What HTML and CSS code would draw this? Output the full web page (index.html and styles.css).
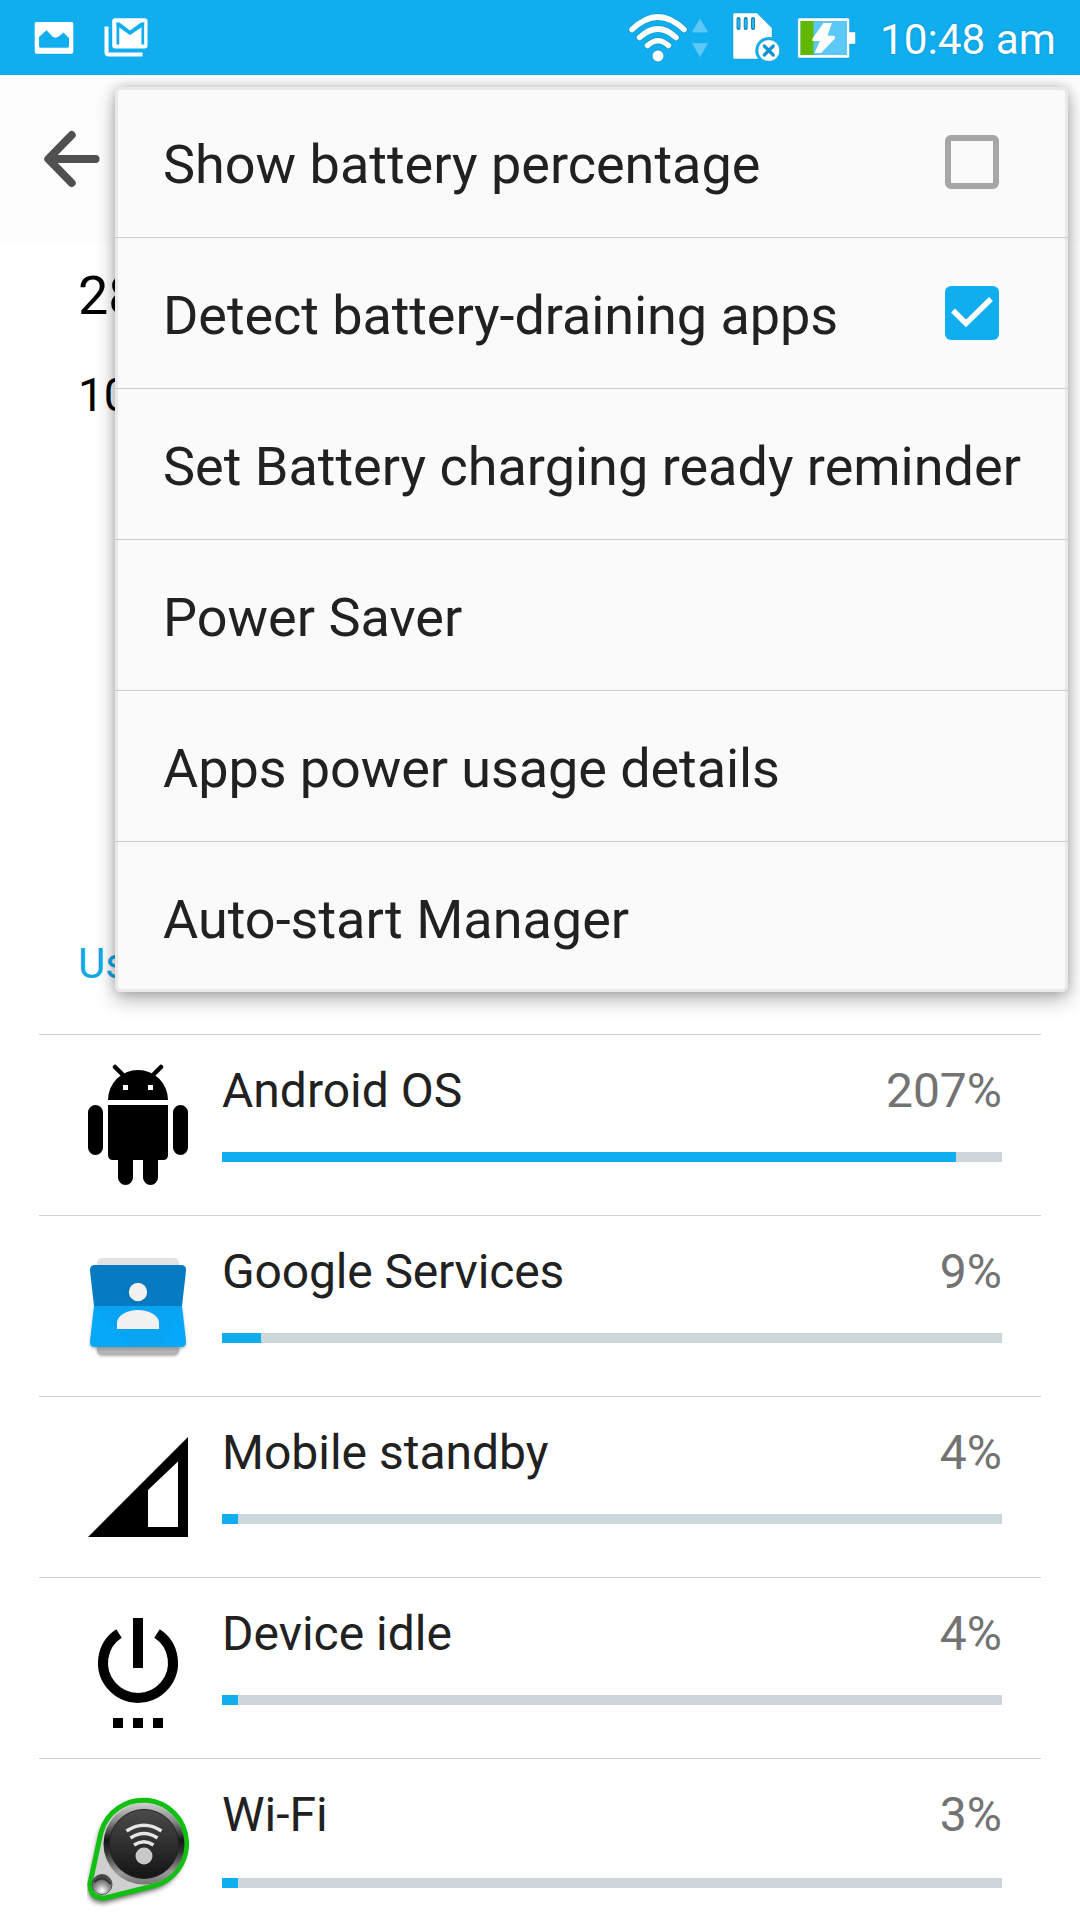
FILE: index.html
```html
<!DOCTYPE html>
<html lang="en">
<head>
<meta charset="utf-8">
<title>Battery</title>
<link rel="stylesheet" href="styles.css">
</head>
<body>
<div class="screen">
  <header class="status">
    <div class="status-left">
      <svg width="40" height="34" viewBox="34 21 40 34"><path fill="#fff" fill-rule="evenodd" d="M36.500 22H71.500Q73.300 22 73.300 23.800V52Q73.300 53.700 71.500 53.700H36.500Q34.700 53.700 34.700 52V23.800Q34.700 22 36.500 22ZM39 37V46Q39 47.700 40.700 47.700H67.300Q69 47.700 69 46V38L63.500 32.500L60 35.500Q55.500 39.500 52 36L46.500 30.300Z"/></svg>
      <svg width="44" height="39" viewBox="104.500 18.500 44 39"><path fill="none" stroke="#fff" stroke-width="4" d="M107 27V52.500Q107 55 109.500 55H143"/><rect x="112.700" y="18.800" width="35.300" height="30.200" rx="3" fill="#fff"/><path fill="none" stroke="#10aeef" stroke-width="2.700" d="M118.400 45V25L130.500 33.600L143.300 25V45"/><path fill="#10aeef" d="M117 23H120L130.500 31L141.500 23H144.700V26L130.500 35.500L117 26Z"/></svg>
    </div>
    <div class="status-right">
      <svg class="wifi" width="62" height="52" viewBox="627 12 62 52"><g fill="none" stroke="#0f86b8" stroke-opacity=".45" stroke-width="7.200" stroke-linecap="round"><path d="M632 29.500Q658 4.500 684 29.500M639.500 37.500Q658 20.500 676 37.500M647.500 45.500Q658 36 668.500 45.500"/></g><g fill="none" stroke="#fff" stroke-width="5.500" stroke-linecap="round"><path d="M632 29.500Q658 4.500 684 29.500M639.500 37.500Q658 20.500 676 37.500M647.500 45.500Q658 36 668.500 45.500"/></g><circle cx="658" cy="56" r="5.700" fill="#fff" stroke="#0f86b8" stroke-opacity=".4"/></svg>
      <svg class="arrows" width="16" height="52" viewBox="692.500 12 16 52"><path fill="#5fc8f6" stroke="#5fc8f6" stroke-width=".7" d="M700.500 19L708 32H693ZM693 43.500H708L700.500 56.500Z"/></svg>
      <svg class="sd" width="50" height="52" viewBox="732 12 50 52"><path fill="#fff" stroke="#0f86b8" stroke-opacity=".5" stroke-width=".8" d="M734.500 13H757L772 28V59H734.500Q733 59 733 57.500V14.500Q733 13 734.500 13Z"/><path stroke="#0e87bd" stroke-width="4" stroke-linecap="round" d="M738.500 19V28M745.700 19V28M753 19V28"/><path stroke="#2cb5ef" stroke-width="2" d="M738.500 19V28M745.700 19V28M753 19V28"/><circle cx="768.800" cy="50.500" r="13.500" fill="#10aeef"/><circle cx="768.800" cy="50.500" r="10.800" fill="#fff" stroke="#0f86b8" stroke-opacity=".6" stroke-width=".8"/><path stroke="#0e95d0" stroke-width="3.200" stroke-linecap="round" d="M764.300 46L773.300 55M773.300 46L764.300 55"/></svg>
      <svg class="battery" width="60" height="52" viewBox="797.500 12 60 52"><path fill="#fff" stroke="#0f86b8" stroke-opacity=".5" stroke-width=".8" d="M799.500 18H848.500Q850 18 850 19.500V32H856V44H850V56.500Q850 58 848.500 58H799.500Q798.300 58 798.300 56.500V19.500Q798.300 18 799.500 18Z"/><rect x="801" y="21" width="46.500" height="34" fill="#5bc8f7"/><rect x="801" y="21" width="13" height="34" fill="#60b800"/><path fill="#fff" d="M824 23H832.500L828 35.500L835.500 36V38.500L821.500 53H815L820.500 41H813V38.500Z"/></svg>
      <span class="clock">10:48 am</span>
    </div>
  </header>

  <div class="toolbar">
    <svg width="58" height="60" viewBox="43 129 58 60"><path fill="none" stroke="#505050" stroke-width="8" stroke-linecap="round" stroke-linejoin="round" d="M71.700 135L48.300 159L71.700 183M50 159H95.500"/></svg>
  </div>

  <main>
    <section class="summary">
      <div class="level">28</div>
      <div class="remaining">10</div>
      <div class="since">Use</div>
    </section>

    <ul class="usage">
      <li class="row">
        <svg class="icon" viewBox="87 1064 102 122"><path d="M108 1100A30 30 0 0 1 168 1100ZM108 1105H168V1155Q168 1160 163 1160H113Q108 1160 108 1155Z"/><path stroke="#000" stroke-width="4.500" stroke-linecap="round" d="M115 1067L123 1075M161 1067L153 1075"/><path stroke="#000" stroke-width="15" stroke-linecap="round" d="M95.500 1112.500V1147.500M180.500 1112.500V1147.500M125.500 1155V1177.500M150.500 1155V1177.500"/><path fill="#fff" d="M123 1085H128V1090H123ZM148 1085H153V1090H148Z"/></svg>
        <div class="info"><div class="line"><span>Android OS</span><span class="pct">207%</span></div><div class="bar"><div class="fill" style="width:94.1%"></div></div></div>
      </li>
      <li class="row">
        <svg class="icon" viewBox="87 1245 102 122">
          <defs><filter id="soft" x="-20%" y="-20%" width="140%" height="140%"><feGaussianBlur stdDeviation="1.500"/></filter></defs>
          <rect x="97" y="1280" width="82" height="76" rx="5" fill="#777" opacity=".6" filter="url(#soft)"/>
          <rect x="97" y="1330" width="82" height="25" rx="5" fill="#b3b3b3"/>
          <rect x="97" y="1258" width="82" height="30" rx="5" fill="#e2e2e2"/>
          <path fill="#777" opacity=".5" filter="url(#soft)" d="M94 1308L90 1345Q91 1349 96 1349H180Q185 1349 186 1345L182 1308Z"/>
          <path fill="#077bc1" d="M95 1265H181Q186.500 1265 186 1271L182 1306H94L90 1271Q89.500 1265 95 1265Z"/>
          <path fill="#08a8f8" d="M94 1306H182L186 1341Q186.500 1347 181 1347H95Q89.500 1347 90 1341Z"/>
          <path fill="#089be9" d="M94 1306L135 1347H161L182 1306Z" opacity=".35"/>
          <circle cx="138" cy="1292.500" r="9.500" fill="#065b94" opacity=".5" filter="url(#soft)"/>
          <circle cx="138" cy="1292" r="9.200" fill="#f1f1f1"/>
          <path fill="#f1f1f1" d="M117 1329V1322C118 1315 127 1310 138 1310S158 1315 159 1322V1329Z"/>
        </svg>
        <div class="info"><div class="line"><span class="tight">Google Services</span><span class="pct">9%</span></div><div class="bar"><div class="fill" style="width:5%"></div></div></div>
      </li>
      <li class="row">
        <svg class="icon" viewBox="87 1426 102 122"><path fill-rule="evenodd" d="M88 1537L188 1437V1537ZM148 1490V1527H178V1461.500Z"/></svg>
        <div class="info"><div class="line"><span>Mobile standby</span><span class="pct">4%</span></div><div class="bar"><div class="fill" style="width:2.05%"></div></div></div>
      </li>
      <li class="row">
        <svg class="icon" viewBox="87 1607 102 122"><path fill="none" stroke="#000" stroke-width="10" d="M119 1633.500A35 35 0 1 0 157 1633.500M138 1618V1668"/><path d="M113 1718H123V1728H113ZM133 1718H143V1728H133ZM153 1718H163V1728H153Z"/></svg>
        <div class="info"><div class="line"><span>Device idle</span><span class="pct">4%</span></div><div class="bar"><div class="fill" style="width:2.05%"></div></div></div>
      </li>
      <li class="row row-app">
        <svg class="icon" viewBox="86 1786.500 102 122">
          <defs><linearGradient id="rim" x1="0" y1="0" x2="0" y2="1"><stop offset="0" stop-color="#ccc"/><stop offset=".22" stop-color="#8a8a8a"/><stop offset=".45" stop-color="#151515"/><stop offset=".6" stop-color="#333"/><stop offset=".85" stop-color="#999"/><stop offset="1" stop-color="#777"/></linearGradient><linearGradient id="dial" x1="0" y1="0" x2="0" y2="1"><stop offset="0" stop-color="#4a4a4a"/><stop offset="1" stop-color="#141414"/></linearGradient><radialGradient id="screw" cx=".5" cy=".8" r=".7"><stop offset="0" stop-color="#fff"/><stop offset=".5" stop-color="#999"/><stop offset="1" stop-color="#444"/></radialGradient><filter id="glow" x="-20%" y="-20%" width="140%" height="140%"><feGaussianBlur stdDeviation="2.500"/></filter></defs>
          <path fill="#222" opacity=".7" filter="url(#glow)" d="M98 1833A44 44 0 1 1 155 1888L105 1901Q87 1903 87 1886Z"/>
          <path fill="#cfcfcf" stroke="#10c010" stroke-width="5" d="M100 1831A43.500 43.500 0 1 1 152 1884.500L104 1896.500Q88.500 1897 89 1882Z"/>
          <circle cx="143" cy="1842.500" r="40.500" fill="url(#rim)"/>
          <circle cx="143" cy="1842.500" r="34.500" fill="url(#dial)" stroke="#222"/>
          <g fill="none" stroke="#e5e5e5" stroke-width="3.500"><path d="M125.500 1829.500Q143 1818 160.500 1829.500M129.500 1836.500Q143 1827.500 156.500 1836.500M133 1843.500Q143 1837 152.500 1843.500"/></g>
          <circle cx="143" cy="1854.500" r="8.500" fill="#c8c8c8"/>
          <circle cx="101" cy="1883" r="10" fill="url(#screw)" stroke="#555"/>
          <path fill="none" stroke="#333" stroke-width="2" d="M93.500 1880.500Q101.500 1872.500 109.500 1882.500"/>
        </svg>
        <div class="info"><div class="line"><span>Wi-Fi</span><span class="pct">3%</span></div><div class="bar"><div class="fill" style="width:2.05%"></div></div></div>
      </li>
    </ul>
  </main>

  <div class="menu">
    <div class="item"><span class="label">Show battery percentage</span><span class="check"></span></div>
    <div class="item"><span class="label tight">Detect battery-draining apps</span><span class="check checked"><svg width="54" height="54" viewBox="0 0 54 54"><path fill="none" stroke="#fff" stroke-width="5.500" d="M8 24.500L21 37.500L46 13"/></svg></span></div>
    <div class="item"><span class="label">Set Battery charging ready reminder</span></div>
    <div class="item"><span class="label">Power Saver</span></div>
    <div class="item"><span class="label tight">Apps power usage details</span></div>
    <div class="item"><span class="label">Auto-start Manager</span></div>
  </div>
</div>
</body>
</html>
```

FILE: styles.css
```css
* { box-sizing: border-box; }
body {
  margin: 0;
  background: #fff;
  font-family: Roboto, "Noto Sans", sans-serif;
}
svg { display: block; }
.screen {
  position: relative;
  width: 1080px;
  height: 1920px;
  overflow: hidden;
  background: #fff;
}

/* status bar */
.status {
  display: flex;
  justify-content: space-between;
  height: 75px;
  padding: 0 24px 0 34px;
  background: #10aeef;
}
.status-left { display: flex; align-items: center; gap: 30px; }
.status-right { display: flex; align-items: center; }
.arrows { margin-left: 3px; }
.sd { margin-left: 23.500px; }
.battery { margin-left: 15.500px; }
.clock {
  width: 176px;
  margin-left: 23px;
  padding-top: 5px;
  font-size: 42.300px;
  line-height: 74px;
  color: #fff;
  white-space: nowrap;
  text-shadow: 0 0 2px rgba(0, 90, 140, .5);
}

.toolbar {
  display: flex;
  align-items: center;
  height: 168px;
  padding-left: 43px;
  background: #fdfdfd;
}

/* battery summary */
.summary {
  height: 791px;
  padding: 22px 0 0 78px;
  color: #000;
}
.level { font-size: 54px; line-height: 62px; }
.remaining { margin-top: 38px; font-size: 46px; line-height: 60px; }
.since { margin-top: 511px; font-size: 42px; line-height: 56px; color: #10a9e8; }

/* usage list */
.usage { margin: 0; padding: 0 39px; list-style: none; }
.row {
  display: flex;
  height: 181px;
  border-top: 1px solid #d0d0d0;
  padding: 29px 39px 0 48px;
}
.icon { flex: none; width: 102px; height: 122px; }
.info { flex: 1; margin-left: 33px; }
.line {
  display: flex;
  justify-content: space-between;
  height: 88px;
  font-size: 48px;
  line-height: 53px;
  color: #212121;
}
.pct { color: #737373; }
.bar { height: 10px; background: #cdd6db; }
.fill { height: 10px; background: #10aeef; }
.row-app .line { height: 90px; }

/* overflow menu */
.menu {
  position: absolute;
  top: 87px;
  left: 115px;
  width: 953px;
  height: 905px;
  border-radius: 6px;
  background: #fafafa;
  box-shadow: inset 0 0 0 3px #e9e9e9, 0 8px 20px rgba(0, 0, 0, .28), 0 0 12px rgba(0, 0, 0, .2);
}
.item {
  display: flex;
  align-items: center;
  justify-content: space-between;
  height: 151px;
  padding: 0 69px 0 48px;
  border-bottom: 1px solid #ccc;
}
.item:last-child { height: 150px; border-bottom: 0; }
.label {
  padding-top: 5px;
  font-size: 54px;
  line-height: 64px;
  color: #212121;
  white-space: nowrap;
}
.tight { letter-spacing: -.08px; }
.line .tight { letter-spacing: -.15px; }
.check {
  width: 54px;
  height: 54px;
  border: 6px solid #a6a6a6;
  border-radius: 6px;
}
.checked { border: 0; background: #10aeef; }
```
